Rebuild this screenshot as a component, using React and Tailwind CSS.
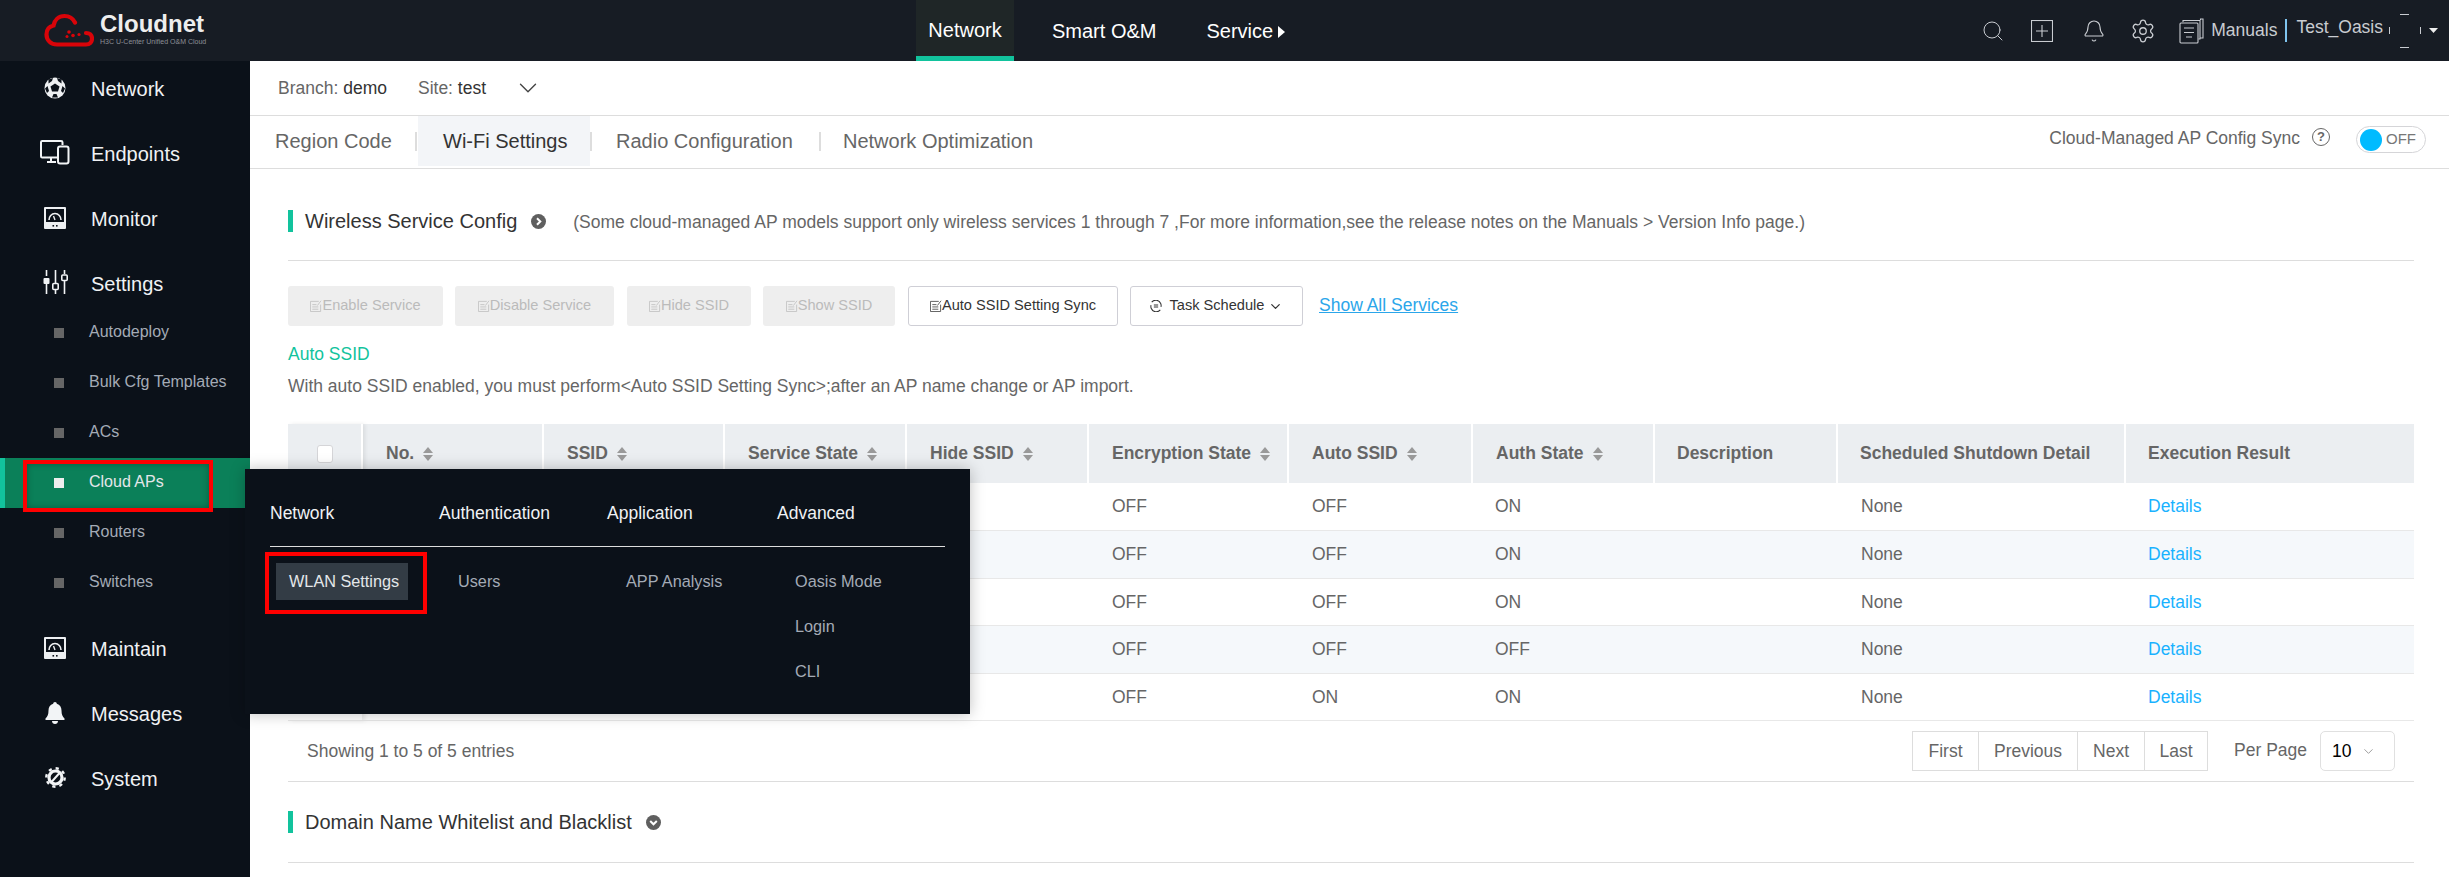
import { Search, Bell, Settings as Gear, ChevronDown } from "lucide-react";

const sideItems = [
  { name: "Autodeploy" },
  { name: "Bulk Cfg Templates" },
  { name: "ACs" },
  { name: "Cloud APs", active: true },
  { name: "Routers" },
  { name: "Switches" },
];

const columns = [
  { label: "", width: 74 },
  { label: "No.", width: 181, sort: true },
  { label: "SSID", width: 181, sort: true },
  { label: "Service State", width: 182, sort: true },
  { label: "Hide SSID", width: 182, sort: true },
  { label: "Encryption State", width: 200, sort: true },
  { label: "Auto SSID", width: 184, sort: true },
  { label: "Auth State", width: 182, sort: true },
  { label: "Description", width: 183 },
  { label: "Scheduled Shutdown Detail", width: 288 },
  { label: "Execution Result", width: 289 },
];

const rows = [
  { enc: "OFF", auto: "OFF", auth: "ON" },
  { enc: "OFF", auto: "OFF", auth: "ON" },
  { enc: "OFF", auto: "OFF", auth: "ON" },
  { enc: "OFF", auto: "OFF", auth: "OFF" },
  { enc: "OFF", auto: "ON", auth: "ON" },
];

function CloudLogo() {
  return (
    <svg width="50" height="36" viewBox="0 0 50 36" fill="none">
      <path d="M31 9.5C28.5 4.5 24.5 3 20.5 3C14.5 3 10.5 7 9.5 12.5C5 13.5 2.5 17 2.5 21.5C2.5 27.5 7 31.5 13 31.5H42C46 31.5 48 29 48 25.5C48 22 45.5 20 42 20" stroke="#d90409" strokeWidth="4.2" strokeLinecap="round" />
      <circle cx="25" cy="19" r="1.8" fill="#d90409" />
      <circle cx="29" cy="22.5" r="1.8" fill="#d90409" />
      <circle cx="23" cy="23.5" r="1.5" fill="#d90409" />
      <circle cx="35" cy="21.5" r="1.6" fill="#d90409" />
    </svg>
  );
}

function BallIcon() {
  return (
    <svg width="22" height="22" viewBox="0 0 22 22">
      <circle cx="11" cy="11" r="10.5" fill="#eef0f2" />
      <path d="M11 6.5L15.5 9.5L14 14.5H8L6.5 9.5Z" fill="#0b1119" />
      <path d="M4.5 2.5L9 1L8 4L4.5 6.5ZM17.5 2.5L13 1L14 4L17.5 6.5ZM1 11.5L3.5 9L5 14L3 16ZM21 11.5L18.5 9L17 14L19 16ZM8 20.5L9.5 17H12.5L14 20.5Z" fill="#0b1119" />
    </svg>
  );
}

function EndpointsIcon() {
  return (
    <svg width="30" height="25" viewBox="0 0 30 25" fill="none" stroke="#f2f4f6" strokeWidth="2">
      <path d="M17 17.5H2.2C1.5 17.5 1 17 1 16.3V2.2C1 1.5 1.5 1 2.2 1H21C21.7 1 22.5 1.5 22.5 2.2V5" />
      <path d="M11 18V21M7 22H16" />
      <rect x="18" y="6.5" width="10.5" height="17" rx="2" />
    </svg>
  );
}

function GaugeIcon() {
  return (
    <svg width="22" height="22" viewBox="0 0 22 22">
      <rect x="0" y="0" width="22" height="22" rx="1" fill="#eef0f2" />
      <rect x="2" y="2" width="18" height="13" fill="#0b1119" />
      <path d="M5 13C5 9.5 7.5 6.5 11 6.5C14.5 6.5 17 9.5 17 13" stroke="#eef0f2" strokeWidth="1.6" fill="none" />
      <path d="M11 13L9.5 9" stroke="#eef0f2" strokeWidth="1.4" />
      <rect x="8.5" y="18" width="1.6" height="1.6" fill="#0b1119" />
      <rect x="12" y="18" width="1.6" height="1.6" fill="#0b1119" />
    </svg>
  );
}

function SlidersIcon() {
  return (
    <svg width="25" height="25" viewBox="0 0 25 25" fill="#f2f4f6">
      <rect x="2.7" y="0" width="1.6" height="6" />
      <rect x="0.5" y="8" width="6" height="6" rx="1" />
      <rect x="2.7" y="14" width="1.6" height="10" />
      <rect x="11.7" y="0" width="1.6" height="13" />
      <rect x="11.7" y="20" width="1.6" height="4" />
      <rect x="9.8" y="13.5" width="5.4" height="6" rx="1" fill="none" stroke="#f2f4f6" strokeWidth="1.6" />
      <rect x="20.7" y="0" width="1.6" height="4" />
      <rect x="20.7" y="11" width="1.6" height="13" />
      <rect x="18.8" y="5" width="5.4" height="5.5" rx="1" fill="none" stroke="#f2f4f6" strokeWidth="1.6" />
    </svg>
  );
}

function BellSolid() {
  return (
    <svg width="20" height="22" viewBox="0 0 20 22" fill="#f2f4f6">
      <path d="M10 0C11 0 11.8.8 11.8 1.8C15 2.6 16.5 5.5 16.5 8.5C16.5 12.5 17.5 14.5 19.5 16.5V18H.5V16.5C2.5 14.5 3.5 12.5 3.5 8.5C3.5 5.5 5 2.6 8.2 1.8C8.2.8 9 0 10 0Z" />
      <path d="M7 19H13C13 20.8 11.7 22 10 22C8.3 22 7 20.8 7 19Z" />
    </svg>
  );
}

function GearSolid() {
  return (
    <svg width="21" height="21" viewBox="0 0 21 21" fill="none" stroke="#f2f4f6">
      <circle cx="10.5" cy="10.5" r="6.5" strokeWidth="3.2" />
      <circle cx="10.5" cy="10.5" r="9.2" strokeWidth="2.4" strokeDasharray="3.2 4" />
      <path d="M6.5 15L14.5 6" strokeWidth="2" />
    </svg>
  );
}

function DocsIcon() {
  return (
    <svg width="25" height="26" viewBox="0 0 25 26" fill="none" stroke="#c9ccd1" strokeWidth="1.1">
      <rect x="1" y="5" width="18" height="20" rx="1" />
      <path d="M4 4V2.5H21V21H19.5M21.5 2V1H24V20H21.5" />
      <path d="M5 10H15M5 14.5H15M7 19H13" />
    </svg>
  );
}

function PlusBox() {
  return (
    <svg width="22" height="22" viewBox="0 0 22 22" fill="none" stroke="#c9ccd1" strokeWidth="1.1">
      <rect x=".5" y=".5" width="21" height="21" />
      <path d="M11 5V17M5 11H17" />
    </svg>
  );
}

// broken avatar, only bits of the circle show up
function AvatarBits() {
  return (
    <svg width="32" height="34" viewBox="0 0 32 34" stroke="#c9ccd1" strokeWidth="1" fill="none">
      <path d="M11 .5H20M11 33.5H20M.5 13V20M31.5 13V20" />
    </svg>
  );
}

function EditIcon({ color }) {
  return (
    <svg width="12" height="12" viewBox="0 0 13 13" fill="none" stroke={color} strokeWidth="1" className="shrink-0">
      <path d="M9.5 1.5H.5V12.5H11.5V5" />
      <path d="M2.5 5H7M2.5 7.5H9M2.5 10H9" />
      <path d="M8 6L12 .8" />
    </svg>
  );
}

function SortIcon() {
  return (
    <svg width="10" height="14" viewBox="0 0 10 14" fill="#999999" className="shrink-0 ml-[9px]">
      <path d="M5 0L10 6H0Z" />
      <path d="M5 14L10 8H0Z" />
    </svg>
  );
}

function ClockIcon() {
  return (
    <svg width="12" height="12" viewBox="0 0 14 14" fill="none" stroke="#333333" strokeWidth="1.2" className="shrink-0">
      <path d="M2 2.5A6.2 6.2 0 0 1 12.5 4M12 11.5A6.2 6.2 0 0 1 1.5 10M1.2 6A6.2 6.2 0 0 0 1.5 10M12.8 8A6.2 6.2 0 0 0 12.5 4" />
      <path d="M4.5 5.8H9.5M4.5 8.2H9.5" />
    </svg>
  );
}

function CircleChevron({ down }) {
  return (
    <svg width="15" height="15" viewBox="0 0 15 15" className="shrink-0">
      <circle cx="7.5" cy="7.5" r="7.5" fill="#5f5f5f" />
      <path d={down ? "M4.2 6L7.5 9.3L10.8 6" : "M6 4.2L9.3 7.5L6 10.8"} stroke="#ffffff" strokeWidth="2" fill="none" />
    </svg>
  );
}

function SideLink({ icon, name }) {
  return (
    <div className="flex items-center h-[65px] pl-[40px] text-[20px] text-[#f0f2f4]">
      <span className="w-[30px] flex justify-center">{icon}</span>
      <span className="ml-[21px] mt-[2px]">{name}</span>
    </div>
  );
}

function SectionTitle({ title, down }) {
  return (
    <div className="flex items-center">
      <span className="w-[5px] h-[22px] bg-[#12c39d]" />
      <span className="ml-[12px] text-[20px] text-[#333333]">{title}</span>
      <span className="ml-[14px]">
        <CircleChevron down={down} />
      </span>
    </div>
  );
}

function ActionButton({ label, width, ml }) {
  return (
    <button className={`${width} ${ml} h-[40px] rounded-[3px] bg-[#eeeeee] text-[#bbbbbb] text-[14.6px] flex items-center justify-center`}>
      <EditIcon color="#c4c4c4" />
      {label}
    </button>
  );
}

export default function App() {
  return (
    <div className="relative w-[2449px] h-[877px] overflow-hidden bg-white flex flex-col font-['Liberation_Sans',Arial,sans-serif]">
      {/* Top bar */}
      <header className="relative z-10 h-[61px] shrink-0 bg-[#171c24] flex items-center">
        <div className="w-[916px] pl-[44px] flex items-center">
          <CloudLogo />
          <div className="ml-[6px] flex flex-col">
            <span className="text-[24px] leading-[26px] font-bold text-[#eeeeee] -mt-[3px]">Cloudnet</span>
            <span className="text-[7px] leading-[10px] text-[#8d9096] whitespace-nowrap">H3C U-Center Unified O&amp;M Cloud</span>
          </div>
        </div>
        <nav className="flex h-full text-[20px] text-white">
          <div className="w-[98px] h-full bg-[#1f2627] border-b-[5px] border-[#12c39d] flex items-center justify-center pt-[3px]">Network</div>
          <div className="ml-[38px] flex items-center">Smart O&amp;M</div>
          <div className="ml-[50px] flex items-center">
            Service
            <svg width="7" height="12" viewBox="0 0 7 12" fill="#ffffff" className="ml-[5px] mt-[2px]">
              <path d="M0 0L7 6L0 12Z" />
            </svg>
          </div>
        </nav>
        <div className="ml-auto flex items-center text-[#c9ccd1]">
          <Search size={24} strokeWidth={1} color="#c9ccd1" />
          <span className="ml-[26px]"><PlusBox /></span>
          <span className="ml-[29px]"><Bell size={24} strokeWidth={1.1} color="#c9ccd1" /></span>
          <span className="ml-[24px]"><Gear size={26} strokeWidth={1.2} color="#c9ccd1" /></span>
          <span className="ml-[23px]"><DocsIcon /></span>
          <span className="ml-[7px] text-[17.5px]">Manuals</span>
          <span className="ml-[8px] w-[2px] h-[23px] bg-[#7fc4ee]" />
          <span className="ml-[9px] text-[17.5px] -mt-[6px]">Test_Oasis</span>
          <span className="ml-[6px]"><AvatarBits /></span>
          <svg width="9" height="5" viewBox="0 0 9 5" fill="#eeeeee" className="ml-[8px] mr-[11px]">
            <path d="M0 0H9L4.5 5Z" />
          </svg>
        </div>
      </header>

      <div className="flex flex-1 min-h-0">
        {/* Sidebar */}
        <aside className="w-[250px] shrink-0 bg-[#0b1119]">
          <div className="-mt-[6px]">
            <SideLink icon={<BallIcon />} name="Network" />
            <SideLink icon={<EndpointsIcon />} name="Endpoints" />
            <SideLink icon={<GaugeIcon />} name="Monitor" />
            <SideLink icon={<SlidersIcon />} name="Settings" />
          </div>
          <div className="-mt-[7px]">
            {sideItems.map((item) => (
              <div
                key={item.name}
                className={`relative h-[50px] flex items-center text-[16px] pb-[3px] ${item.active ? "bg-[#0b8059] text-[#e4e7ea]" : "text-[#a4abb6]"}`}
              >
                {item.active && <span className="absolute left-0 top-0 w-[5px] h-full bg-[#12c39d]" />}
                <span className={`ml-[54px] mt-[3px] w-[10px] h-[10px] ${item.active ? "bg-[#eeeeee]" : "bg-[#666666]"}`} />
                <span className="ml-[25px]">{item.name}</span>
                {item.active && (
                  <span className="absolute left-[23px] top-[2px] w-[190px] h-[52px] border-[4px] border-[#ff0000] z-10 shadow-[inset_0_0_6px_rgba(0,0,0,0.3)]" />
                )}
              </div>
            ))}
          </div>
          <div className="mt-[7px]">
            <SideLink icon={<GaugeIcon />} name="Maintain" />
            <SideLink icon={<BellSolid />} name="Messages" />
            <SideLink icon={<GearSolid />} name="System" />
          </div>
        </aside>

        {/* Main */}
        <main className="flex-1 min-w-0 flex flex-col">
          <div className="h-[55px] shrink-0 border-b border-[#dddddd] flex items-center pl-[28px] text-[17.5px] text-[#666666]">
            <span>Branch: <span className="text-[#333333]">demo</span></span>
            <span className="ml-[31px]">Site: <span className="text-[#333333]">test</span></span>
            <ChevronDown size={30} strokeWidth={1.1} color="#444444" className="ml-[27px]" />
          </div>

          <div className="h-[53px] shrink-0 border-b border-[#dddddd] pb-[2px] flex items-center text-[20px] text-[#666666]">
            <span className="ml-[25px] w-[140px]">Region Code</span>
            <span className="w-[2px] h-[19px] bg-[#dddddd]" />
            <span className="ml-[1px] w-[172px] h-full bg-[#f3f5f8] text-[#333333] flex items-center pl-[25px]">Wi-Fi Settings</span>
            <span className="w-[2px] h-[19px] bg-[#dddddd]" />
            <span className="ml-[24px] w-[203px]">Radio Configuration</span>
            <span className="w-[2px] h-[19px] bg-[#dddddd]" />
            <span className="ml-[22px]">Network Optimization</span>
            <span className="ml-auto text-[17.5px] -mt-[6px]">Cloud-Managed AP Config Sync</span>
            <span className="ml-[12px] -mt-[8px] w-[18px] h-[18px] rounded-full border border-[#666666] text-[13px] font-bold flex items-center justify-center">?</span>
            <span className="ml-[26px] mr-[23px] -mt-[3px] w-[70px] h-[27px] rounded-full border border-[#d5d5d8] flex items-center pl-[3px]">
              <span className="w-[22px] h-[22px] rounded-full bg-[#00bbff]" />
              <span className="ml-[4px] text-[15px] text-[#777777]">OFF</span>
            </span>
          </div>

          <div className="ml-[38px] mr-[35px] flex flex-col">
            <div className="h-[92px] pt-[13px] border-b border-[#dddddd] flex items-center">
              <SectionTitle title="Wireless Service Config" />
              <span className="ml-[27px] mt-[2px] text-[17.5px] text-[#666666] whitespace-nowrap">
                (Some cloud-managed AP models support only wireless services 1 through 7 ,For more information,see the release notes on the Manuals &gt; Version Info page.)
              </span>
            </div>

            <div className="mt-[25px] flex items-center">
              <ActionButton label="Enable Service" width="w-[155px]" ml="" />
              <ActionButton label="Disable Service" width="w-[159px]" ml="ml-[12px]" />
              <ActionButton label="Hide SSID" width="w-[124px]" ml="ml-[13px]" />
              <ActionButton label="Show SSID" width="w-[132px]" ml="ml-[12px]" />
              <button className="ml-[13px] w-[210px] h-[40px] rounded-[3px] border border-[#cfcfd6] bg-white text-[#333333] text-[14.6px] flex items-center justify-center">
                <EditIcon color="#555555" />
                Auto SSID Setting Sync
              </button>
              <button className="ml-[12px] w-[173px] h-[40px] rounded-[3px] border border-[#cfcfd6] bg-white text-[#333333] text-[14.6px] flex items-center justify-center">
                <ClockIcon />
                <span className="ml-[8px]">Task Schedule</span>
                <ChevronDown size={15} strokeWidth={2} color="#333333" className="ml-[4px]" />
              </button>
              <a className="ml-[16px] text-[17.5px] text-[#2ba6ea] underline -mt-[2px]">Show All Services</a>
            </div>

            <p className="mt-[16px] text-[17.5px] leading-[24px] text-[#12c39d]">Auto SSID</p>
            <p className="mt-[8px] text-[17.5px] leading-[24px] text-[#666666]">
              With auto SSID enabled, you must perform&lt;Auto SSID Setting Sync&gt;;after an AP name change or AP import.
            </p>

            <table className="mt-[26px] w-[2126px] table-fixed border-collapse text-[17.5px] text-[#666666]">
              <colgroup>
                {columns.map((col, i) => (
                  <col key={i} style={{ width: col.width }} />
                ))}
              </colgroup>
              <thead>
                <tr className="h-[59px] bg-[#ebeef1]">
                  {columns.map((col, i) => (
                    <th key={i} className={`border-r-2 border-white last:border-r-0 text-left font-bold ${col.sort ? "pl-[23px]" : "pl-[22px]"} ${i === 0 ? "shadow-[3px_0_4px_rgba(0,0,0,0.08)]" : ""}`}>
                      {i === 0 ? (
                        <span className="block ml-[7px] w-[16px] h-[18px] rounded-[3px] border border-[#d5d5d8] bg-white" />
                      ) : (
                        <span className="flex items-center whitespace-nowrap">
                          {col.label}
                          {col.sort && <SortIcon />}
                        </span>
                      )}
                    </th>
                  ))}
                </tr>
              </thead>
              <tbody>
                {rows.map((row, i) => (
                  <tr key={i} className={`h-[47.6px] border-b border-[#e8e8e8] ${i % 2 === 1 ? "bg-[#f5f8fb]" : "bg-white"}`}>
                    <td className="shadow-[3px_0_4px_rgba(0,0,0,0.08)]" />
                    <td />
                    <td />
                    <td />
                    <td />
                    <td className="pl-[24px]">{row.enc}</td>
                    <td className="pl-[24px]">{row.auto}</td>
                    <td className="pl-[23px]">{row.auth}</td>
                    <td />
                    <td className="pl-[24px]">None</td>
                    <td className="pl-[23px] text-[#1ab2ff]">Details</td>
                  </tr>
                ))}
              </tbody>
            </table>

            <div className="h-[61px] border-b border-[#dddddd] flex items-center pl-[19px] text-[17px] text-[#666666]">
              <span className="text-[17.5px]">Showing 1 to 5 of 5 entries</span>
              <div className="ml-auto flex h-[40px] border border-[#dddddd] text-[17.5px]">
                <span className="w-[66px] flex items-center justify-center border-r border-[#dddddd]">First</span>
                <span className="w-[99px] flex items-center justify-center border-r border-[#dddddd]">Previous</span>
                <span className="w-[67px] flex items-center justify-center border-r border-[#dddddd]">Next</span>
                <span className="w-[62px] flex items-center justify-center">Last</span>
              </div>
              <span className="ml-[26px] text-[17.5px] -mt-[2px]">Per Page</span>
              <div className="ml-[13px] mr-[19px] w-[75px] h-[40px] rounded-[5px] border border-[#e0e0e0] flex items-center pl-[11px] text-[17.5px] text-black">
                10
                <ChevronDown size={15} strokeWidth={1.5} color="#999999" className="ml-[10px]" />
              </div>
            </div>

            <div className="h-[81px] border-b border-[#dddddd] flex items-center">
              <SectionTitle title="Domain Name Whitelist and Blacklist" down />
            </div>
          </div>
        </main>
      </div>

      {/* Flyout menu over the sidebar and table */}
      <div className="absolute left-[245px] top-[469px] w-[725px] h-[245px] z-20 bg-[#0b1119] shadow-[0_0_14px_rgba(0,0,0,0.25)]">
        <div className="mx-[25px] pt-[32px] pb-[21px] border-b border-[#dddddd] grid grid-cols-[169px_168px_170px_1fr] text-[17.5px] leading-[24px] text-[#f0f2f4]">
          <span>Network</span>
          <span>Authentication</span>
          <span>Application</span>
          <span>Advanced</span>
        </div>
        <div className="mx-[25px] pt-[12px] grid grid-cols-[169px_168px_170px_1fr] text-[16.25px] text-[#a4abb6]">
          <div className="relative ml-[6px] mt-[4px] w-[132px] h-[37px] bg-[#333c45] text-[#e4e7ea] flex items-center pl-[13px]">
            WLAN Settings
            <span className="absolute -left-[11px] -top-[11px] w-[162px] h-[62px] border-[4px] border-[#ff0000]" />
          </div>
          <div className="pl-[19px] h-[45px] flex items-center">Users</div>
          <div className="pl-[19px] h-[45px] flex items-center">APP Analysis</div>
          <div className="pl-[18px] flex flex-col">
            <span className="h-[45px] flex items-center">Oasis Mode</span>
            <span className="h-[45px] flex items-center">Login</span>
            <span className="h-[45px] flex items-center">CLI</span>
          </div>
        </div>
      </div>
    </div>
  );
}
